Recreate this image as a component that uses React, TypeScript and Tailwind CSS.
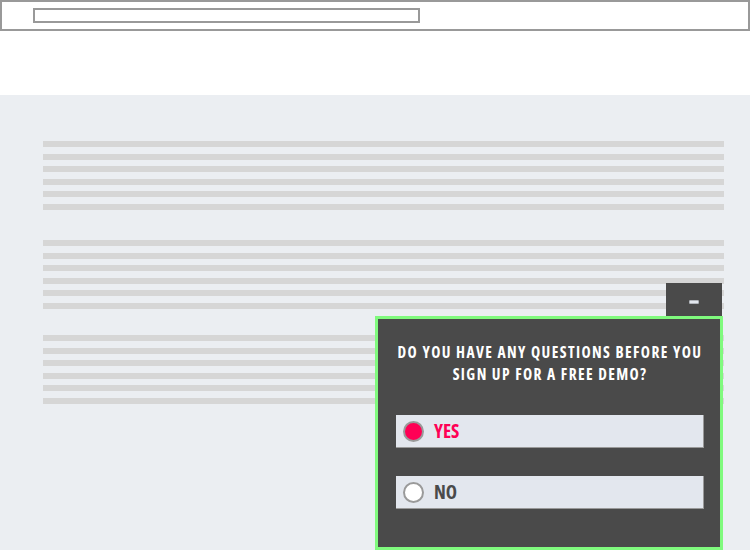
import { useState } from 'react'

const groups = [
  { key: 'a', className: '' },
  { key: 'b', className: 'mt-[30px]' },
  { key: 'c', className: 'mt-[26px]' },
]

function TextLines({ className }: { className: string }) {
  return (
    <div className={`flex flex-col gap-[6.6px] ${className}`}>
      {[0, 1, 2, 3, 4, 5].map((i) => (
        <div key={i} className="h-[6px] w-full bg-[#d6d6d6]" />
      ))}
    </div>
  )
}

export default function App() {
  const [answer, setAnswer] = useState<'yes' | 'no'>('yes')

  const options: { id: 'yes' | 'no'; label: string }[] = [
    { id: 'yes', label: 'YES' },
    { id: 'no', label: 'NO' },
  ]

  return (
    <div className="relative h-[550px] w-[750px] overflow-hidden bg-white font-['Open_Sans',sans-serif] font-stretch-[75%]">
      {/* Browser-ish top bar */}
      <div className="h-[31px] border-2 border-[#999999] pt-[6px] pl-[31px]">
        <div className="h-[15px] w-[387px] border-2 border-[#999999]" />
      </div>

      {/* Page body */}
      <div className="mt-[64px] h-[455px] bg-[#ebeef2] pt-[46px] pr-[26px] pl-[43px]">
        {groups.map((g) => (
          <TextLines key={g.key} className={g.className} />
        ))}
      </div>

      {/* Chat widget */}
      <div className="absolute top-[283px] left-[375px] flex w-[348px] flex-col items-end">
        <button className="mr-[1px] flex h-[33px] w-[56px] items-center justify-center bg-[#4a4a4a] pt-[5px]">
          <span className="block h-[4px] w-[10px] rounded-[1px] border border-[#b0b4ba] bg-[#e3e7ee]" />
        </button>
        <div className="h-[234px] w-full border-[3px] border-[#80fa7e] bg-[#4a4a4a] pt-[22px] pr-[16px] pl-[18px]">
          <p className="text-center text-[15.5px] leading-[22px] font-bold tracking-[1.4px] whitespace-nowrap text-white">
            DO YOU HAVE ANY QUESTIONS BEFORE YOU
            <br />
            SIGN UP FOR A FREE DEMO?
          </p>
          <div className="mt-[30px] flex flex-col gap-[28px]">
            {options.map((o) => {
              const selected = answer === o.id
              return (
                <button
                  key={o.id}
                  onClick={() => setAnswer(o.id)}
                  className="flex h-[33px] w-full items-center border-r border-b border-[#999999] bg-[#e3e7ee] pl-[7px] text-left"
                >
                  <span
                    className={`block h-[21px] w-[21px] rounded-full border-2 border-[#9a9a9a] ${
                      selected ? 'bg-[#ff0055]' : 'bg-white'
                    }`}
                  />
                  <span
                    className={`ml-[10px] text-[19px] leading-none font-bold ${
                      selected ? 'text-[#ff0055]' : 'text-[#4a4a4a]'
                    }`}
                  >
                    {o.label}
                  </span>
                </button>
              )
            })}
          </div>
        </div>
      </div>
    </div>
  )
}
